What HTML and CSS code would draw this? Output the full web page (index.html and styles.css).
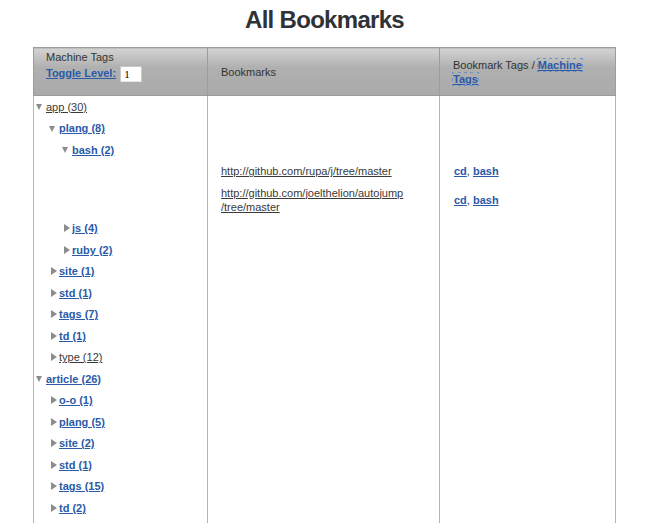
FILE: index.html
```html
<!DOCTYPE html>
<html>
<head>
<meta charset="utf-8">
<title>All Bookmarks</title>
<link rel="stylesheet" href="styles.css">
</head>
<body>
<h1 class="title">All Bookmarks</h1>
<table class="bm-table">
  <colgroup>
    <col class="c1">
    <col class="c2">
    <col class="c3">
  </colgroup>
  <thead>
    <tr>
      <th class="h-tags">
        <div class="h-line">Machine Tags</div>
        <div class="h-line"><a class="link" href="#">Toggle Level:</a> <input class="level" type="text" value="1"></div>
      </th>
      <th>Bookmarks</th>
      <th class="h-right">Bookmark Tags / <a class="link focus" href="#">Machine Tags</a></th>
    </tr>
  </thead>
  <tbody>
    <tr><td class="tree"><div class="item lvl1"><span class="tw open"></span><a class="plain" href="#">app (30)</a></div></td><td></td><td></td></tr>
    <tr><td class="tree"><div class="item lvl2"><span class="tw open"></span><a class="link" href="#">plang (8)</a></div></td><td></td><td></td></tr>
    <tr><td class="tree"><div class="item lvl3"><span class="tw open"></span><a class="link" href="#">bash (2)</a></div></td><td></td><td></td></tr>
    <tr><td class="tree"></td><td class="url"><a class="plain" href="#">http://github.com/rupa/j/tree/master</a></td><td class="tags"><a class="link" href="#">cd</a>, <a class="link" href="#">bash</a></td></tr>
    <tr><td class="tree"></td><td class="url"><a class="plain" href="#">http://github.com/joelthelion/autojump<br>/tree/master</a></td><td class="tags"><a class="link" href="#">cd</a>, <a class="link" href="#">bash</a></td></tr>
    <tr><td class="tree"><div class="item lvl3"><span class="tw closed"></span><a class="link" href="#">js (4)</a></div></td><td></td><td></td></tr>
    <tr><td class="tree"><div class="item lvl3"><span class="tw closed"></span><a class="link" href="#">ruby (2)</a></div></td><td></td><td></td></tr>
    <tr><td class="tree"><div class="item lvl2"><span class="tw closed"></span><a class="link" href="#">site (1)</a></div></td><td></td><td></td></tr>
    <tr><td class="tree"><div class="item lvl2"><span class="tw closed"></span><a class="link" href="#">std (1)</a></div></td><td></td><td></td></tr>
    <tr><td class="tree"><div class="item lvl2"><span class="tw closed"></span><a class="link" href="#">tags (7)</a></div></td><td></td><td></td></tr>
    <tr><td class="tree"><div class="item lvl2"><span class="tw closed"></span><a class="link" href="#">td (1)</a></div></td><td></td><td></td></tr>
    <tr><td class="tree"><div class="item lvl2"><span class="tw closed"></span><a class="plain" href="#">type (12)</a></div></td><td></td><td></td></tr>
    <tr><td class="tree"><div class="item lvl1"><span class="tw open"></span><a class="link" href="#">article (26)</a></div></td><td></td><td></td></tr>
    <tr><td class="tree"><div class="item lvl2"><span class="tw closed"></span><a class="link" href="#">o-o (1)</a></div></td><td></td><td></td></tr>
    <tr><td class="tree"><div class="item lvl2"><span class="tw closed"></span><a class="link" href="#">plang (5)</a></div></td><td></td><td></td></tr>
    <tr><td class="tree"><div class="item lvl2"><span class="tw closed"></span><a class="link" href="#">site (2)</a></div></td><td></td><td></td></tr>
    <tr><td class="tree"><div class="item lvl2"><span class="tw closed"></span><a class="link" href="#">std (1)</a></div></td><td></td><td></td></tr>
    <tr><td class="tree"><div class="item lvl2"><span class="tw closed"></span><a class="link" href="#">tags (15)</a></div></td><td></td><td></td></tr>
    <tr><td class="tree"><div class="item lvl2"><span class="tw closed"></span><a class="link" href="#">td (2)</a></div></td><td></td><td></td></tr>
    <tr class="spacer"><td class="tree"></td><td></td><td></td></tr>
  </tbody>
</table>
</body>
</html>
```
FILE: styles.css
```css
html {
  overflow: hidden;
}

body {
  margin: 0;
  background: #fff;
  color: #333;
  font-family: "Liberation Sans", Arial, sans-serif;
  font-size: 11px;
}

.title {
  margin: 6px 0 13px;
  font-size: 24px;
  line-height: 28px;
  font-weight: bold;
  letter-spacing: -0.7px;
  text-align: center;
  color: #2f3337;
}

.bm-table {
  width: 582px;
  margin: 0 auto;
  border-collapse: collapse;
  table-layout: fixed;
}

.c1 { width: 174px; }
.c2 { width: 232px; }
.c3 { width: 176px; }

.bm-table th {
  height: 46px;
  padding: 0 13px;
  border: 1px solid #9c9c9c;
  background: linear-gradient(#d3d3d3 0%, #b0b0b0 40%, #aaaaaa 100%);
  font-weight: normal;
  text-align: left;
  line-height: 14px;
  vertical-align: middle;
  color: #333;
}

.bm-table th.h-tags {
  vertical-align: top;
  padding-top: 1px;
  padding-left: 12px;
}

.h-line {
  line-height: 16px;
}

.level {
  width: 22px;
  height: 16px;
  box-sizing: border-box;
  margin: 0 0 0 1px;
  padding: 0 3px;
  border: 1px solid #c8c8c8;
  border-bottom-color: #e4e4e4;
  font-family: "Liberation Serif", serif;
  font-size: 11px;
  vertical-align: middle;
  background: #fff;
  color: #000;
}

.bm-table th.h-right {
  padding-right: 16px;
}

.bm-table td {
  padding: 3.75px 13px;
  line-height: 14px;
  vertical-align: middle;
  border-left: 1px solid #b5b5b5;
  border-right: 1px solid #b5b5b5;
}

.bm-table td.tree {
  padding-left: 1px;
  padding-right: 4px;
}

.bm-table td.tags {
  padding-left: 14px;
}

.spacer td {
  height: 21px;
  padding: 0;
}

.item {
  display: flex;
  align-items: center;
  height: 14px;
}

.lvl1 { padding-left: 1px; }
.lvl2 { padding-left: 14px; }
.lvl3 { padding-left: 27px; }

.tw {
  flex: none;
  width: 10px;
  height: 14px;
  display: flex;
  align-items: center;
}

.tw.open::before {
  content: "";
  border-left: 3.5px solid transparent;
  border-right: 3.5px solid transparent;
  border-top: 6px solid #8c8c8c;
  margin-top: 1px;
}

.tw.closed::before {
  content: "";
  margin-left: 2px;
  border-top: 4px solid transparent;
  border-bottom: 4px solid transparent;
  border-left: 6px solid #8c8c8c;
}

.link {
  color: #2a5aa8;
  font-weight: bold;
  text-decoration: underline;
}

.link.focus {
  outline: 1px dotted #6f8fc8;
}

.plain {
  color: #3a3a3a;
  text-decoration: underline;
}
```
